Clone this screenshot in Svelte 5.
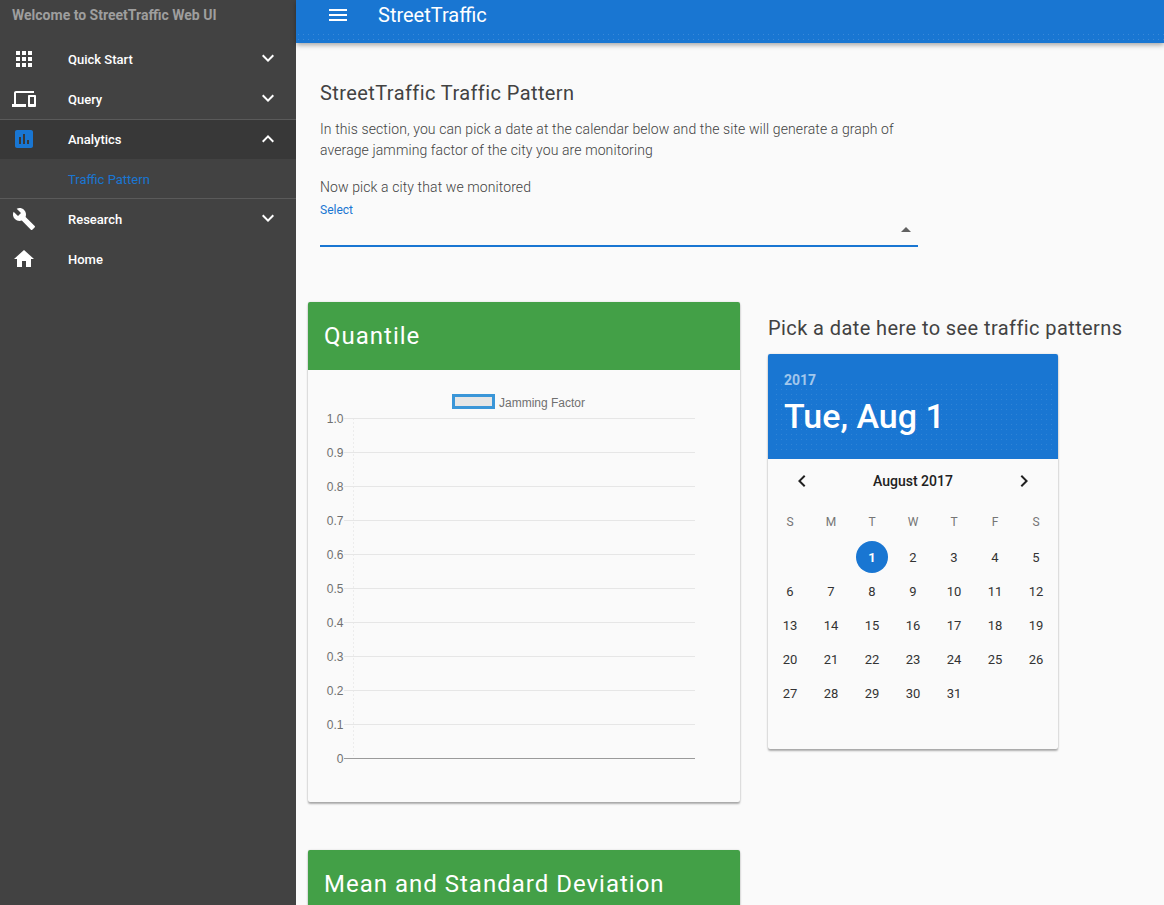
<script>
	const chevronDown = "M16.59 8.59L12 13.17 7.41 8.59 6 10l6 6 6-6z";
	const chevronUp = "M12 8l-6 6 1.41 1.41L12 10.83l4.59 4.58L18 14z";

	const navItems = [
		{
			label: "Quick Start",
			chevron: chevronDown,
			icon: "M4 8h4V4H4v4zm6 12h4v-4h-4v4zm-6 0h4v-4H4v4zm0-6h4v-4H4v4zm6 0h4v-4h-4v4zm6-10v4h4V4h-4zm-6 4h4V4h-4v4zm6 6h4v-4h-4v4zm0 6h4v-4h-4v4z",
		},
		{
			label: "Query",
			chevron: chevronDown,
			divider: true,
			icon: "M4 6h18V4H4c-1.1 0-2 .9-2 2v11H0v3h14v-3H4V6zm19 2h-6c-.55 0-1 .45-1 1v10c0 .55.45 1 1 1h6c.55 0 1-.45 1-1V9c0-.55-.45-1-1-1zm-1 9h-4v-7h4v7z",
		},
		{
			label: "Analytics",
			chevron: chevronUp,
			active: true,
			icon: "M19 3H5c-1.1 0-2 .9-2 2v14c0 1.1.9 2 2 2h14c1.1 0 2-.9 2-2V5c0-1.1-.9-2-2-2zM9 17H7v-7h2v7zm4 0h-2V7h2v10zm4 0h-2v-4h2v4z",
		},
		{ label: "Traffic Pattern", sub: true, divider: true },
		{
			label: "Research",
			chevron: chevronDown,
			icon: "M22.7 19l-9.1-9.1c.9-2.3.4-5-1.5-6.9-2-2-5-2.4-7.4-1.3L9 6 6 9 1.6 4.7C.4 7.1.9 10.1 2.9 12.1c1.9 1.9 4.6 2.4 6.9 1.5l9.1 9.1c.4.4 1 .4 1.4 0l2.3-2.3c.5-.4.5-1.1.1-1.4z",
		},
		{ label: "Home", icon: "M10 20v-6h4v6h5v-8h3L12 3 2 12h3v8z" },
	];

	// Chart.js style y axis, 0 to 1.0 on a 34px step
	const ticks = ["1.0", "0.9", "0.8", "0.7", "0.6", "0.5", "0.4", "0.3", "0.2", "0.1", "0"];

	const weekdays = ["S", "M", "T", "W", "T", "F", "S"];
	const blanks = [null, null];
	const days = [...blanks, ...Array.from({ length: 31 }, (_, i) => i + 1)];
</script>

<div class="page">
	<aside class="sidebar">
		<div class="welcome">Welcome to StreetTraffic Web UI</div>
		<nav>
			{#each navItems as item}
				<div class="nav-row" class:active={item.active} class:sub={item.sub} class:divider={item.divider}>
					{#if item.icon}
						<svg class="nav-icon" viewBox="0 0 24 24" width="24" height="24"><path d={item.icon} /></svg>
					{/if}
					<span class="nav-label">{item.label}</span>
					{#if item.chevron}
						<svg class="nav-chevron" viewBox="0 0 24 24" width="24" height="24"><path d={item.chevron} /></svg>
					{/if}
				</div>
			{/each}
		</nav>
	</aside>

	<div class="main">
		<header class="toolbar">
			<svg class="menu" viewBox="0 0 24 24" width="24" height="24"><path d="M3 18h18v-2H3v2zm0-5h18v-2H3v2zm0-7v2h18V6H3z" /></svg>
			<span class="brand">StreetTraffic</span>
		</header>

		<section class="intro">
			<h2>StreetTraffic Traffic Pattern</h2>
			<p class="lead">In this section, you can pick a date at the calendar below and the site will generate a graph of average jamming factor of the city you are monitoring</p>
			<p class="pick">Now pick a city that we monitored</p>
			<div class="select">
				<span class="select-label">Select</span>
				<span class="select-arrow"></span>
			</div>
		</section>

		<div class="columns">
			<div class="charts">
				<article class="card chart-card">
					<div class="card-head"><h3>Quantile</h3></div>
					<svg class="chart" viewBox="0 0 432 432" width="432" height="432">
						<rect class="legend-box" x="145.5" y="25.5" width="40" height="12" />
						<text class="legend-text" x="191" y="37">Jamming Factor</text>
						<line class="axis-y" x1="45.5" y1="48" x2="45.5" y2="388" />
						{#each ticks as tick, i}
							<line class={i === 10 ? "zero" : "grid"} x1="36" y1={48.5 + i * 34} x2="387" y2={48.5 + i * 34} />
							<text class="tick" x="35.5" y={52.5 + i * 34}>{tick}</text>
						{/each}
					</svg>
				</article>
				<article class="card">
					<div class="card-head"><h3>Mean and Standard Deviation</h3></div>
				</article>
			</div>

			<div class="date-col">
				<h2 class="date-title">Pick a date here to see traffic patterns</h2>
				<div class="card calendar">
					<div class="cal-head">
						<div class="cal-year">2017</div>
						<div class="cal-date">Tue, Aug 1</div>
					</div>
					<div class="cal-nav">
						<svg viewBox="0 0 24 24" width="24" height="24"><path d="M15.41 7.41L14 6l-6 6 6 6 1.41-1.41L10.83 12z" /></svg>
						<span>August 2017</span>
						<svg viewBox="0 0 24 24" width="24" height="24"><path d="M10 6L8.59 7.41 13.17 12l-4.58 4.59L10 18l6-6z" /></svg>
					</div>
					<div class="cal-grid weekdays">
						{#each weekdays as d}<span>{d}</span>{/each}
					</div>
					<div class="cal-grid">
						{#each days as d}
							<span class="day" class:selected={d === 1}>{d ?? ""}</span>
						{/each}
					</div>
				</div>
			</div>
		</div>
	</div>
</div>

<style>
	:global(body) {
		margin: 0;
		background: #fafafa;
		font-family: Roboto, "Liberation Sans", sans-serif;
		overflow: hidden;
	}
	.page {
		display: flex;
		height: 905px;
		overflow: hidden;
	}

	.sidebar {
		flex: 0 0 296px;
		background: #424242;
		color: #fff;
	}
	.welcome {
		height: 39px;
		padding: 6px 0 0 12px;
		box-sizing: border-box;
		font-size: 14px;
		font-weight: 700;
		line-height: 18px;
		color: #9e9e9e;
	}
	.nav-row {
		position: relative;
		display: flex;
		align-items: center;
		height: 40px;
		box-sizing: border-box;
		padding-left: 12px;
	}
	.nav-row.divider::after {
		content: "";
		position: absolute;
		left: 0;
		right: 0;
		bottom: -1px;
		height: 1px;
		background: #5a5a5a;
		z-index: 1;
	}
	.nav-row.sub.divider::after {
		bottom: 0;
	}
	.nav-row.active {
		background: #383838;
	}
	.nav-icon {
		flex: none;
		fill: #fff;
		margin-right: 32px;
	}
	.active .nav-icon {
		fill: #1976d2;
	}
	.nav-label {
		flex: 1;
		font-size: 13px;
		font-weight: 500;
	}
	.nav-row.sub {
		padding-left: 68px;
	}
	.sub .nav-label {
		color: #1976d2;
		font-weight: 400;
	}
	.nav-chevron {
		flex: none;
		fill: #fff;
		margin: 0 16px 2px 0;
	}
	.active .nav-chevron {
		margin-bottom: 0;
	}

	.main {
		flex: 1;
		min-width: 0;
		color: #424242;
	}
	.toolbar {
		position: relative;
		display: flex;
		align-items: center;
		height: 43px;
		padding: 0 0 13px 30px;
		box-sizing: border-box;
		background: #1976d2;
		color: #fff;
		box-shadow: 0 2px 5px rgba(0, 0, 0, 0.35);
	}
	/* faint dotted texture along the bottom of the bar */
	.toolbar::after {
		content: "";
		position: absolute;
		left: 0;
		right: 0;
		bottom: 1px;
		height: 10px;
		background-image: radial-gradient(circle, rgba(255, 255, 255, 0.14) 0.6px, transparent 0.8px);
		background-size: 5px 5px;
	}
	.menu {
		fill: #fff;
		margin-right: 28px;
	}
	.brand {
		font-size: 20px;
		font-weight: 400;
	}

	.intro {
		width: 598px;
		padding: 38px 0 0 24px;
	}
	h2 {
		margin: 0;
		font-size: 20px;
		font-weight: 400;
		line-height: 24px;
		letter-spacing: 0.41px;
		color: #424242;
	}
	.lead {
		margin: 14px 0 0;
		font-size: 14px;
		font-weight: 300;
		line-height: 21px;
		letter-spacing: 0.1px;
	}
	.pick {
		margin: 16px 0 0;
		font-size: 14px;
		font-weight: 300;
		line-height: 21px;
		letter-spacing: 0.1px;
	}
	.select {
		position: relative;
		height: 44px;
		margin-top: 5px;
		box-sizing: border-box;
		border-bottom: 2px solid #1976d2;
	}
	.select-label {
		display: block;
		font-size: 12px;
		line-height: 14px;
		font-weight: 400;
		color: #1976d2;
	}
	.select-arrow {
		position: absolute;
		right: 7px;
		top: 24px;
		border-left: 5px solid transparent;
		border-right: 5px solid transparent;
		border-bottom: 5px solid #616161;
	}

	.columns {
		display: flex;
		align-items: flex-start;
		gap: 28px;
		padding: 55px 0 0 12px;
	}
	.charts {
		flex: 0 0 432px;
		display: flex;
		flex-direction: column;
		gap: 48px;
	}
	.card {
		background: #fafafa;
		border-radius: 2px;
		box-shadow: 0 2px 2px rgba(0, 0, 0, 0.3), 0 0 2px rgba(0, 0, 0, 0.15);
		overflow: hidden;
	}
	.chart-card {
		height: 500px;
	}
	.card-head {
		height: 68px;
		padding: 0 16px;
		background: #43a047;
		color: #fff;
	}
	h3 {
		margin: 0;
		font-size: 24px;
		font-weight: 400;
		line-height: 68px;
		letter-spacing: 1px;
	}
	.chart {
		display: block;
	}
	.legend-box {
		fill: #e6e6e6;
		stroke: #3a96d8;
		stroke-width: 3;
	}
	.legend-text,
	.tick {
		font-family: "Liberation Sans", sans-serif;
		font-size: 12px;
		fill: #707070;
	}
	.tick {
		text-anchor: end;
	}
	.grid {
		stroke: #e6e6e6;
		stroke-width: 1;
	}
	.zero {
		stroke: #9a9a9a;
		stroke-width: 1;
	}
	.axis-y {
		stroke: #ececec;
		stroke-width: 1;
		stroke-dasharray: 2 2;
	}

	.date-col {
		flex: none;
		padding-top: 14px;
	}
	.calendar {
		width: 290px;
		height: 395px;
		margin-top: 14px;
	}
	.cal-head {
		position: relative;
		height: 105px;
		padding: 16px 16px 0;
		box-sizing: border-box;
		background: #1976d2;
		color: #fff;
	}
	.cal-head::after {
		content: "";
		position: absolute;
		inset: 28px 6px 6px;
		background-image: radial-gradient(circle, rgba(255, 255, 255, 0.1) 0.6px, transparent 0.8px);
		background-size: 5px 5px;
	}
	.cal-year {
		font-size: 14px;
		font-weight: 700;
		line-height: 20px;
		color: rgba(255, 255, 255, 0.6);
	}
	.cal-date {
		margin-top: 6px;
		font-size: 34px;
		font-weight: 500;
		line-height: 40px;
	}
	.cal-nav {
		display: flex;
		align-items: center;
		justify-content: space-between;
		height: 44px;
		padding: 0 22px;
		color: #212121;
		font-size: 14px;
		font-weight: 500;
	}
	.cal-nav svg {
		fill: #212121;
	}
	.cal-grid {
		display: grid;
		grid-template-columns: repeat(7, 41px);
		grid-auto-rows: 34px;
		justify-content: center;
		font-size: 13px;
		color: #333;
		text-align: center;
	}
	.weekdays {
		height: 34px;
		padding-top: 2px;
		margin-bottom: 1px;
		font-size: 12px;
		color: #757575;
	}
	.cal-grid span {
		display: flex;
		align-items: center;
		justify-content: center;
	}
	.day.selected {
		width: 32px;
		height: 32px;
		margin: 1px auto;
		border-radius: 50%;
		background: #1976d2;
		color: #fff;
		font-weight: 700;
	}
</style>
